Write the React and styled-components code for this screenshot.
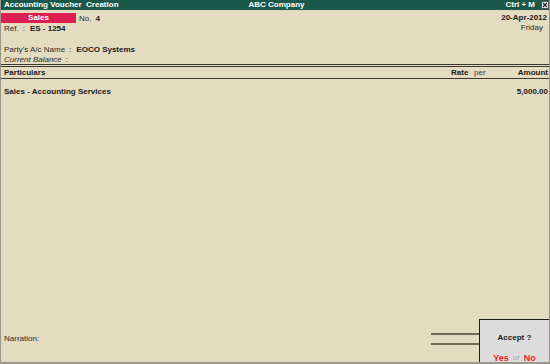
import React from "react";
import styled, { createGlobalStyle } from "styled-components";

const Global = createGlobalStyle`
  html, body { margin: 0; padding: 0; background: #e4dcc0; }
  body { font-family: "Liberation Sans", Arial, sans-serif; }
`;

export default function App() {
  return (
    <>
      <Global />
      <Screen>
        <TitleBar>
          <span>Accounting Voucher&nbsp; Creation</span>
          <Center>ABC Company</Center>
          <Shortcut>
            Ctrl + M
            <CloseBox>
              <svg width="8" height="8" viewBox="0 0 8 8">
                <rect x="0.5" y="0.5" width="7" height="7" fill="#e8e8e8" stroke="#555" />
                <path d="M2 2 L6 6 M6 2 L2 6" stroke="#222" strokeWidth="1.1" />
              </svg>
            </CloseBox>
          </Shortcut>
        </TitleBar>

        <Head>
          <HeadLeft>
            <Line>
              <VoucherType>Sales</VoucherType>
              <Label>No.</Label>
              <Value>4</Value>
            </Line>
            <Line>
              <Label>Ref.</Label>
              <Colon>:</Colon>
              <Value>ES - 1254</Value>
            </Line>
          </HeadLeft>
          <HeadRight>
            <Value>20-Apr-2012</Value>
            <Label>Friday</Label>
          </HeadRight>
        </Head>

        <Party>
          <Line>
            <Label>Party's A/c Name</Label>
            <Colon>:</Colon>
            <Value>EOCO Systems</Value>
          </Line>
          <Line>
            <Label $italic>Current Balance</Label>
            <Colon>:</Colon>
          </Line>
        </Party>

        <TableHead>
          <Particulars>Particulars</Particulars>
          <RateCol>Rate</RateCol>
          <PerCol>per</PerCol>
          <AmountCol>Amount</AmountCol>
        </TableHead>

        <Entry>
          <Particulars>Sales - Accounting Services</Particulars>
          <AmountCol>5,000.00</AmountCol>
        </Entry>

        <Footer>
          <Narration>Narration:</Narration>
          <Totals>
            <Rule />
            <Rule />
          </Totals>
        </Footer>

        <AcceptBox>
          <AcceptText>Accept ?</AcceptText>
          <Choices>
            <Choice>Yes</Choice>
            <Or>or</Or>
            <Choice>No</Choice>
          </Choices>
        </AcceptBox>
      </Screen>
    </>
  );
}

const Screen = styled.div`
  position: relative;
  width: 550px;
  height: 364px;
  box-sizing: border-box;
  display: flex;
  flex-direction: column;
  background: #e4dcc0;
  border-left: 1px solid #9a9888;
  border-right: 1px solid #9a9888;
  border-bottom: 2px solid #9a9888;
  font-size: 8px;
  color: #1a1a1a;
  overflow: hidden;
`;

const TitleBar = styled.div`
  height: 10px;
  margin: 0 -1px;
  padding: 0 1px 0 4px;
  background: #1c5849;
  color: #fff;
  font-weight: bold;
  display: grid;
  grid-template-columns: 1fr auto 1fr;
  align-items: center;
  line-height: 10px;
`;

const Center = styled.span`
  text-align: center;
`;

const Shortcut = styled.span`
  display: flex;
  justify-content: flex-end;
  align-items: center;
  gap: 6px;
`;

const CloseBox = styled.span`
  display: flex;
  width: 8px;
  height: 8px;
`;

const Head = styled.div`
  display: flex;
  justify-content: space-between;
  padding: 3px 2px 0 0;
`;

const HeadLeft = styled.div`
  display: flex;
  flex-direction: column;
`;

const HeadRight = styled.div`
  display: flex;
  flex-direction: column;
  align-items: flex-end;
  line-height: 10px;
`;

const Line = styled.div`
  display: flex;
  align-items: center;
  height: 10px;
  padding-left: 3px;
`;

const VoucherType = styled.span`
  width: 75px;
  height: 10px;
  margin-left: -3px;
  margin-right: 3px;
  background: #db1f52;
  color: #fff;
  font-weight: bold;
  text-align: center;
  line-height: 10px;
`;

const Label = styled.span`
  color: #2a2a2a;
  font-style: ${(p) => (p.$italic ? "italic" : "normal")};
  margin-right: 4px;
`;

const Colon = styled.span`
  margin-right: 5px;
  color: #2a2a2a;
`;

const Value = styled.span`
  font-weight: bold;
`;

const Party = styled.div`
  padding-top: 11px;
`;

const TableHead = styled.div`
  border-top: 3px double #3a3a30;
  border-bottom: 1px solid #3a3a30;
  height: 10px;
  display: flex;
  align-items: center;
  font-weight: bold;
  padding: 0 1px 1px 3px;
`;

const Particulars = styled.span`
  flex: 1;
  font-weight: bold;
`;

const RateCol = styled.span`
  width: 23px;
`;

const PerCol = styled.span`
  width: 14px;
  font-weight: normal;
  color: #3a3a3a;
`;

const AmountCol = styled.span`
  width: 60px;
  text-align: right;
  font-weight: bold;
`;

const Entry = styled.div`
  display: flex;
  align-items: center;
  height: 10px;
  padding: 0 1px 0 3px;
  margin-top: 7px;
`;

const Footer = styled.div`
  margin-top: auto;
  margin-bottom: 19px;
  display: flex;
  align-items: center;
  padding-left: 3px;
`;

const Narration = styled.span`
  flex: 1;
  color: #2a2a2a;
  margin-top: 2px;
`;

const Totals = styled.div`
  width: 48px;
  margin-right: 70px;
  display: flex;
  flex-direction: column;
  gap: 8px;
  transform: translateY(2px);
`;

const Rule = styled.div`
  height: 2px;
  background: #6f6a58;
`;

const AcceptBox = styled.div`
  position: absolute;
  right: -1px;
  bottom: -2px;
  width: 71px;
  height: 45px;
  box-sizing: border-box;
  background: #dcdcdc;
  border: 1px solid #1e1e1e;
  display: flex;
  flex-direction: column;
  align-items: center;
  justify-content: space-between;
  padding: 13px 0 0;
`;

const AcceptText = styled.span`
  font-weight: bold;
  font-size: 8px;
  line-height: 10px;
`;

const Choices = styled.span`
  display: flex;
  gap: 4px;
  font-size: 9px;
  line-height: 10px;
  font-weight: bold;
`;

const Choice = styled.span`
  color: #ee1c24;
`;

const Or = styled.span`
  color: #a8a8a8;
  font-weight: normal;
  font-size: 8px;
  align-self: flex-end;
`;
